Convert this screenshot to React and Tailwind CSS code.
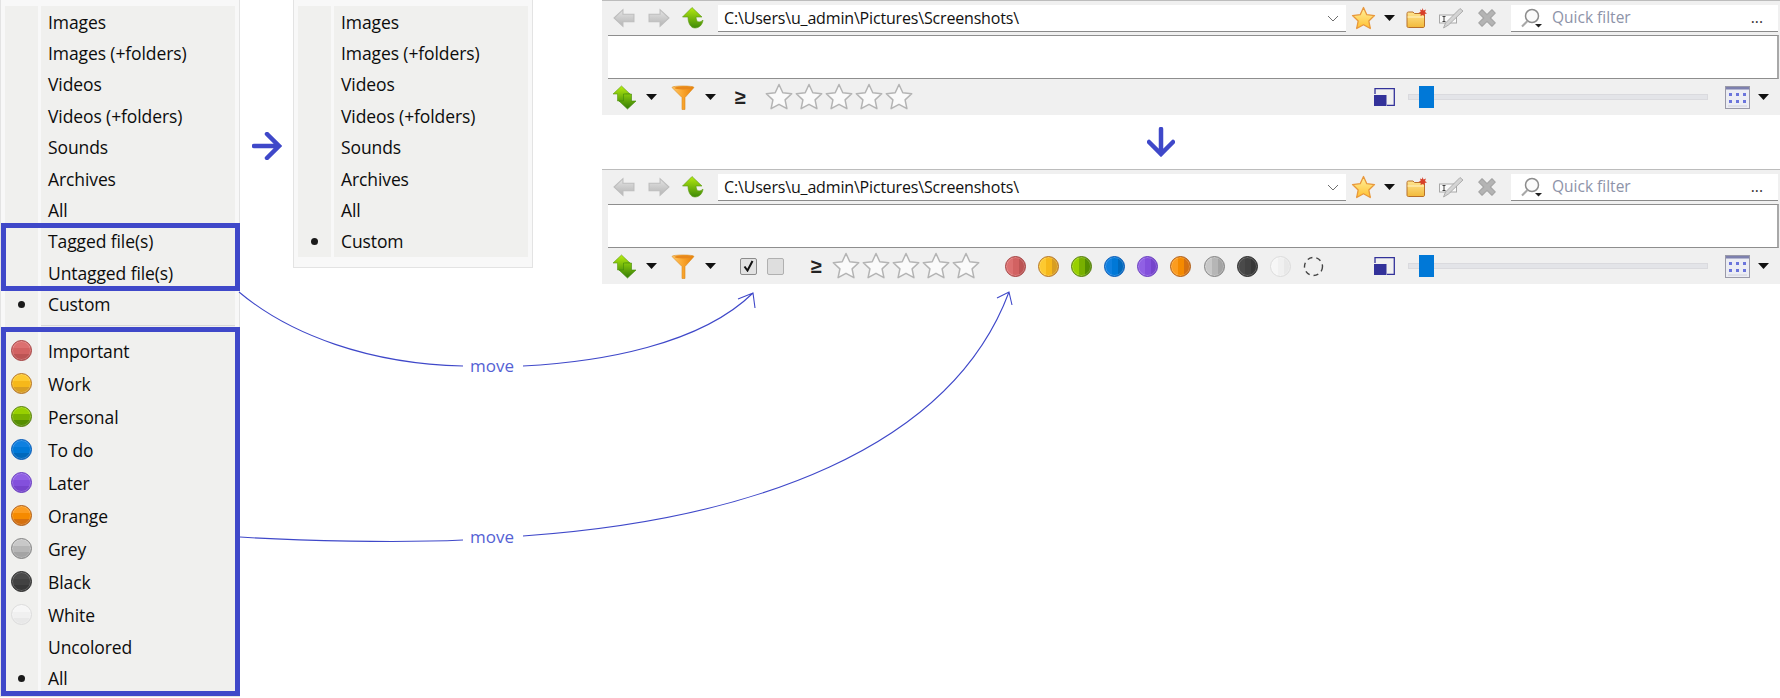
import React from "react";

const fileRows = ["Images", "Images (+folders)", "Videos", "Videos (+folders)", "Sounds", "Archives", "All"];

const colors = [
  { name: "Important", line: "#a64646", a: "#dc7070", b: "#d26262", c: "#bc5454" },
  { name: "Work", line: "#b5762a", a: "#fdc930", b: "#f6b81a", c: "#d89e22" },
  { name: "Personal", line: "#5a8010", a: "#98d000", b: "#78b000", c: "#558e00" },
  { name: "To do", line: "#0a5cb8", a: "#0f80e0", b: "#0078d7", c: "#0068bc" },
  { name: "Later", line: "#6a3fc0", a: "#9060e4", b: "#8350dc", c: "#7644cc" },
  { name: "Orange", line: "#b0601c", a: "#fb9c20", b: "#f58a00", c: "#d47010" },
  { name: "Grey", line: "#858585", a: "#c8c8c8", b: "#b6b6b6", c: "#a4a4a4" },
  { name: "Black", line: "#2e2e2e", a: "#4a4a4a", b: "#424242", c: "#383838" },
  { name: "White", line: "#dcdcdc", a: "#f6f6f6", b: "#f0f0f0", c: "#e8e8e8" },
];

function Dot({ color, sideways }) {
  const id = "clip-" + color.name.replace(" ", "") + (sideways ? "-s" : "");
  return (
    <svg width="21" height="21" viewBox="0 0 21 21" className="block shrink-0">
      <clipPath id={id}>
        <circle cx="10.5" cy="10.5" r="10" />
      </clipPath>
      <g clipPath={`url(#${id})`} transform={sideways ? "rotate(-90 10.5 10.5)" : undefined}>
        <rect width="21" height="8" fill={color.a} />
        <rect y="8" width="21" height="6" fill={color.b} />
        <rect y="14" width="21" height="7" fill={color.c} />
      </g>
      <circle cx="10.5" cy="10.5" r="9" fill="none" stroke="#ffffff" strokeOpacity="0.2" />
      <circle cx="10.5" cy="10.5" r="10" fill="none" stroke={color.line} />
    </svg>
  );
}

function Bullet() {
  return <span className="block w-[7px] h-[7px] rounded-full bg-[#1a1a1a]" />;
}

function MenuRow({ label, icon, tall }) {
  return (
    <div className={`flex gap-[3px] ${tall ? "h-[33px]" : "h-[31.4px]"}`}>
      <div className="w-[33px] bg-[#f0f0ee] flex items-center justify-center">{icon}</div>
      <div className="flex-1 bg-[#f0f0ee] pl-[7px] flex items-center text-[17.5px] text-[#0c0c0c] font-['Open_Sans',sans-serif] tracking-[-0.1px]">
        {label}
      </div>
    </div>
  );
}

function BackArrow({ flip }) {
  return (
    <svg width="22" height="20" viewBox="0 0 21 18" className={`shrink-0 ${flip ? "-scale-x-100" : ""}`}>
      <defs>
        <linearGradient id="navGray" x1="0" y1="0" x2="0" y2="1">
          <stop offset="0" stopColor="#e4e4e4" />
          <stop offset="1" stopColor="#b4b4b4" />
        </linearGradient>
      </defs>
      <path d="M1 9 9.5 1v4.5H20v7H9.5V17Z" fill="url(#navGray)" stroke="#bdbdbd" />
    </svg>
  );
}

function UpArrow() {
  return (
    <svg width="22" height="22" viewBox="0 0 22 22" className="shrink-0">
      <defs>
        <linearGradient id="upGreen" x1="0" y1="0" x2="0" y2="1">
          <stop offset="0" stopColor="#b4ea10" />
          <stop offset="1" stopColor="#3f8a08" />
        </linearGradient>
      </defs>
      <path d="M10 .5 20 10h-6c0 3 1.500 5 3 5 1.500 0 3-1 4-2-.5 5-4 8-8 8-4.500 0-7-5-7-11H.5Z" fill="url(#upGreen)" stroke="#5c9a10" strokeWidth=".6" />
    </svg>
  );
}

function SortIcon() {
  return (
    <svg width="25" height="25" viewBox="0 0 25 25" className="shrink-0">
      <defs>
        <linearGradient id="sortA" x1="0" y1="0" x2="0" y2="1">
          <stop offset="0" stopColor="#b8ee10" />
          <stop offset="1" stopColor="#5aa008" />
        </linearGradient>
        <linearGradient id="sortB" x1="0" y1="0" x2="0" y2="1">
          <stop offset="0" stopColor="#86c80c" />
          <stop offset="1" stopColor="#347c06" />
        </linearGradient>
      </defs>
      <path d="M9.500 1 18 9h-4.500v7h-8V9H1Z" fill="url(#sortA)" stroke="#5c9a10" strokeWidth=".6" />
      <path d="M15.500 24 7 16h4.500V9h8v7H24Z" fill="url(#sortB)" stroke="#3f8a08" strokeWidth=".6" />
    </svg>
  );
}

function Funnel() {
  return (
    <svg width="24" height="25" viewBox="0 0 24 25" className="shrink-0">
      <defs>
        <linearGradient id="funnelO" x1="0" y1="0" x2="1" y2="0">
          <stop offset="0" stopColor="#ffc868" />
          <stop offset=".5" stopColor="#f9a42c" />
          <stop offset="1" stopColor="#e88008" />
        </linearGradient>
      </defs>
      <path d="M1 2.500C1 .5 23 .5 23 2.500L14 12.500V24.500H11V12.500Z" fill="url(#funnelO)" stroke="#d98a20" strokeWidth=".6" />
      <ellipse cx="12" cy="3" rx="8.500" ry="1.500" fill="#e8881c" />
    </svg>
  );
}

function GoldStar() {
  return (
    <svg width="25" height="24" viewBox="0 0 25 24" className="shrink-0">
      <defs>
        <linearGradient id="goldS" x1="0" y1="0" x2="0" y2="1">
          <stop offset="0" stopColor="#fff2a0" />
          <stop offset="1" stopColor="#ffc030" />
        </linearGradient>
      </defs>
      <path d="m12.500 1.500 3.300 7.200 7.700.9-5.700 5.300 1.500 7.600-6.800-3.800-6.800 3.800 1.500-7.600L1.500 9.600l7.700-.9Z" fill="url(#goldS)" stroke="#e8983c" strokeWidth="1.300" strokeLinejoin="round" />
    </svg>
  );
}

function OutlineStar() {
  return (
    <svg width="28" height="28" viewBox="0 0 28 28" className="shrink-0">
      <path d="m14 1.500 3.800 8.300 8.900 1-6.600 6.100 1.800 8.800L14 21.300l-7.900 4.400 1.800-8.800-6.600-6.100 8.900-1Z" fill="#fafafa" stroke="#b4b4b4" strokeWidth="1.500" strokeLinejoin="round" />
    </svg>
  );
}

function NewFolder() {
  return (
    <svg width="21" height="21" viewBox="0 0 21 21" className="shrink-0">
      <defs>
        <linearGradient id="folderY" x1="0" y1="0" x2="0" y2="1">
          <stop offset="0" stopColor="#ffe590" />
          <stop offset="1" stopColor="#f2b93a" />
        </linearGradient>
      </defs>
      <path d="M1 5.500c0-1 .6-1.500 1.500-1.500H7l1.500 1.500H17c1 0 1.500.5 1.500 1.500v11c0 1-.5 1.500-1.500 1.500H2.500C1.500 19.500 1 19 1 18Z" fill="url(#folderY)" stroke="#b8702a" />
      <path d="M1.500 9h16.500" stroke="#fff4c8" />
      <path d="m16.500 0 1 2.500L20 1.500l-1 2.500 2 1.500-2.500.5.500 2.500-2.200-1.500L14.500 8l.3-2.500L12.500 5l2.200-1.200L14 1.500l2 .8Z" fill="#d8402a" />
    </svg>
  );
}

function RenameIcon() {
  return (
    <svg width="25" height="22" viewBox="0 0 25 22" className="shrink-0">
      <rect x=".5" y="8" width="17" height="8" fill="#fafafa" stroke="#a8a8a8" />
      <path d="M3.500 9.500h3M3.500 14.500h3M5 9.500v5" stroke="#444444" fill="none" />
      <path d="M21 1.500 24 4 9.500 18l-5 3 2-5Z" fill="#d4d4d4" stroke="#a0a0a0" strokeWidth=".8" />
    </svg>
  );
}

function GrayX() {
  return (
    <svg width="22" height="22" viewBox="0 0 20 20" className="shrink-0">
      <path d="M2.500 5.500 5.500 2.500 10 7l4.500-4.500 3 3L13 10l4.500 4.500-3 3L10 13l-4.500 4.500-3-3L7 10Z" fill="#b4b4b4" stroke="#a4a4a4" strokeLinejoin="round" />
    </svg>
  );
}

function SearchIcon() {
  return (
    <svg width="21" height="20" viewBox="0 0 21 20" className="shrink-0">
      <circle cx="11" cy="8" r="6.500" fill="#fbfbfb" stroke="#8c8c8c" strokeWidth="1.500" />
      <path d="M6.500 13 1 18.500" stroke="#a8a8a8" strokeWidth="2" />
      <path d="M14 16h7l-3.500 3.500Z" fill="#222222" />
    </svg>
  );
}

function Caret({ className = "" }) {
  return (
    <svg width="11" height="6" viewBox="0 0 11 6" className={`shrink-0 ${className}`}>
      <path d="M0 0h11L5.500 6Z" fill="#111111" />
    </svg>
  );
}

function ResizeIcon() {
  return (
    <svg width="21" height="18" viewBox="0 0 21 18" className="shrink-0">
      <path d="M1 6V.7h19.300v16.600H13" fill="none" stroke="#33329a" strokeWidth="1.300" />
      <rect y="7" width="12.500" height="11" fill="#33329a" />
    </svg>
  );
}

function ViewIcon() {
  return (
    <svg width="25" height="23" viewBox="0 0 25 23" className="shrink-0">
      <rect x=".5" y=".5" width="24" height="22" fill="#ecedf4" stroke="#9a9aa8" />
      <rect x="1" y="1" width="23" height="2.500" fill="#7d80ae" />
      <path d="M4 7h3v3H4zM11 7h3v3h-3zM18 7h3v3h-3zM4 14h3v3H4zM11 14h3v3h-3zM18 14h3v3h-3z" fill="#6a74dc" />
      <path d="M3 20h19" stroke="#cfd0da" />
    </svg>
  );
}

function Toolbar({ extended }) {
  return (
    <div className="w-full h-[115px] bg-[#f0f0f0] border-t border-[#bcbcbc] flex flex-col">
      <div className="h-[34px] flex items-center pl-[11px] pr-[2px]">
        <BackArrow />
        <div className="ml-[13px]"><BackArrow flip /></div>
        <div className="ml-[12px]"><UpArrow /></div>
        <div className="ml-[14px] w-[628px] h-[27px] bg-white border-b border-[#8a8a8a] flex items-center justify-between pl-[6px] pr-[7px] pt-[1px] text-[16px] text-[#111111] font-['Open_Sans',sans-serif] tracking-[-0.17px]">
          <span>C:\Users\u_admin\Pictures\Screenshots\</span>
          <svg width="12" height="7" viewBox="0 0 12 7"><path d="m1 1 5 5 5-5" fill="none" stroke="#6e6e6e" /></svg>
        </div>
        <div className="ml-[5px]"><GoldStar /></div>
        <Caret className="ml-[8px]" />
        <div className="ml-[11px]"><NewFolder /></div>
        <div className="ml-[12px]"><RenameIcon /></div>
        <div className="ml-[12px]"><GrayX /></div>
        <div className="ml-[13px] flex-1 h-[27px] bg-white border-b border-[#8a8a8a] flex items-center pl-[10px] pr-[15px] pt-[1px] text-[15.5px] text-[#8d93a8] font-['Open_Sans',sans-serif]">
          <SearchIcon />
          <span className="ml-[10px]">Quick filter</span>
          <span className="ml-auto text-[#333333] leading-none">...</span>
        </div>
      </div>
      <div className="h-[44px] ml-[6px] mr-[1px] bg-white border-y border-[#8e8e8e] border-r-2 border-r-[#a8a8a8]" />
      <div className="flex-1 flex items-center pl-[10px] pr-[11px]">
        <SortIcon />
        <Caret className="ml-[9px]" />
        <div className="ml-[14px]"><Funnel /></div>
        <Caret className="ml-[10px]" />
        {extended && (
          <div className="ml-[24px] flex items-center gap-[10px]">
            <div className="w-[17px] h-[17px] rounded-[2px] border border-[#8c8c8c] bg-[#e2e2e2] flex items-center justify-center">
              <svg width="11" height="12" viewBox="0 0 11 12"><path d="m1.500 6.500 3 4L9.500 1" fill="none" stroke="#111111" strokeWidth="2" /></svg>
            </div>
            <div className="w-[17px] h-[17px] rounded-[2px] border border-[#b0b0b0] bg-[#dedede]" />
          </div>
        )}
        <span className={`${extended ? "ml-[27px]" : "ml-[19px]"} text-[20px] font-bold leading-none text-[#222222] font-['Liberation_Sans',sans-serif]`}>≥</span>
        <div className={`${extended ? "ml-[10px]" : "ml-[19px]"} flex gap-[2px]`}>
          <OutlineStar />
          <OutlineStar />
          <OutlineStar />
          <OutlineStar />
          <OutlineStar />
        </div>
        {extended && (
          <div className="ml-[25px] flex items-center gap-[12.100px]">
            {colors.map((c) => (
              <Dot key={c.name} color={c} sideways />
            ))}
            <svg width="21" height="21" viewBox="0 0 21 21" className="shrink-0">
              <circle cx="10.500" cy="10.500" r="9" fill="none" stroke="#444444" strokeWidth="1.400" strokeDasharray="5 4" />
            </svg>
          </div>
        )}
        <div className="ml-auto"><ResizeIcon /></div>
        <div className="ml-[13px] w-[300px] h-[6px] bg-[#e3e4e8] border border-[#dadade] relative">
          <div className="absolute left-[10px] top-[-9px] w-[15px] h-[22px] bg-[#0078d7]" />
        </div>
        <div className="ml-[17px]"><ViewIcon /></div>
        <Caret className="ml-[8px]" />
      </div>
    </div>
  );
}

export default function App() {
  return (
    <div className="relative w-[1780px] h-[698px] overflow-hidden bg-white flex items-start">
      {/* first menu */}
      <div className="w-[240px] h-[697px] shrink-0 bg-[#f8f8f8] border border-t-0 border-[#e3e3e3] pt-[6px] px-[4px]">
        {fileRows.map((r) => (
          <MenuRow key={r} label={r} />
        ))}
        <MenuRow label="Tagged file(s)" />
        <MenuRow label="Untagged file(s)" />
        <MenuRow label="Custom" icon={<Bullet />} />
        <div className="flex gap-[3px] h-[14.500px]">
          <div className="w-[33px] bg-[#f0f0ee]" />
          <div className="flex-1 bg-[#f0f0ee]">
            <div className="mt-[5px] h-px bg-[#d8d8d8]" />
          </div>
        </div>
        {colors.map((c) => (
          <MenuRow key={c.name} label={c.name} icon={<Dot color={c} />} tall />
        ))}
        <MenuRow label="Uncolored" />
        <MenuRow label="All" icon={<Bullet />} />
      </div>

      <div className="w-[53px] shrink-0 pt-[132px] pl-[12px]">
        <svg width="30" height="28" viewBox="0 0 30 28" className="block">
          <path d="M2 14h25M15 2l12 12-12 12" fill="none" stroke="#3f48c9" strokeWidth="4.500" strokeLinecap="round" />
        </svg>
      </div>

      {/* second menu */}
      <div className="w-[240px] h-[268px] shrink-0 bg-[#f8f8f8] border border-t-0 border-[#e3e3e3] pt-[6px] px-[4px] pb-[4px]">
        {fileRows.map((r) => (
          <MenuRow key={r} label={r} />
        ))}
        <MenuRow label="Custom" icon={<Bullet />} />
      </div>

      <div className="ml-[69px] w-[1178px] shrink-0 flex flex-col">
        <Toolbar />
        <div className="h-[54px] flex items-center pl-[545px]">
          <svg width="28" height="30" viewBox="0 0 28 30" className="block">
            <path d="M14 2v25M2 15l12 12 12-12" fill="none" stroke="#3f48c9" strokeWidth="4.500" strokeLinecap="round" />
          </svg>
        </div>
        <Toolbar extended />
      </div>

      {/* highlight boxes */}
      <div className="absolute left-[1px] top-[223px] w-[239px] h-[68px] border-[5px] border-[#3f48c9]" />
      <div className="absolute left-[1px] top-[327px] w-[239px] h-[369px] border-[5px] border-[#3f48c9]" />

      {/* move curves */}
      <svg width="1780" height="698" viewBox="0 0 1780 698" className="absolute inset-0 pointer-events-none" fill="none" stroke="#3f48c9" strokeWidth="1.100">
        <path d="M239 292C290 335 370 364 463 366" />
        <path d="M523 366C600 362 700 345 753 293M738 299 753 293 755 308" />
        <path d="M240 537C300 541 400 543 463 540" />
        <path d="M523 536C750 520 950 450 1009 292M997 298 1009 292 1012 305" />
      </svg>
      <span className="absolute left-[470px] top-[354px] text-[17px] leading-[24px] text-[#5561d4] font-['Open_Sans',sans-serif]">move</span>
      <span className="absolute left-[470px] top-[525px] text-[17px] leading-[24px] text-[#5561d4] font-['Open_Sans',sans-serif]">move</span>
    </div>
  );
}
